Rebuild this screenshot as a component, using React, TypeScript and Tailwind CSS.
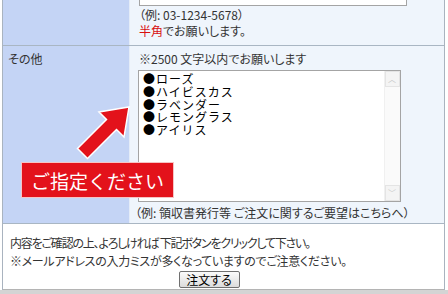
import React from 'react'

const jp = "font-['Noto_Sans_CJK_JP','Noto_Sans',sans-serif] [font-feature-settings:'palt']"

const flowers = ['ローズ', 'ハイビスカス', 'ラベンダー', 'レモングラス', 'アイリス']

function Arrow() {
  return (
    <svg
      className="absolute left-[60px] top-[100px]"
      width="80"
      height="70"
      viewBox="60 100 80 70"
    >
      <polygon
        points="129,107 124,137 116.5,129.5 87.5,158.5 77.5,148.5 106.5,119.5 99,112"
        fill="#e3121b"
        stroke="#ffffff"
        strokeWidth="1.5"
        strokeLinejoin="miter"
      />
    </svg>
  )
}

export default function App() {
  return (
    <div className={`relative w-[448px] h-[294px] overflow-hidden bg-white text-[12px] leading-[16px] text-[#333] ${jp}`}>
      <div className="ml-[2px] w-[443px] border-l border-r border-[#a9b3bf]">
        {/* row: phone */}
        <div className="grid grid-cols-[127px_1fr] border-b border-[#a9b6c3]">
          <div className="bg-[#c4d4f5] border-r border-[#e4ecf8]"></div>
          <div className="bg-[#eff5fc] h-[45px] pl-[9px]">
            <div className="w-[268px] h-[6px] bg-white border border-t-0 border-[#a4a4a4]"></div>
            <p className="mt-[1px]">（例: 03-1234-5678）</p>
            <p>
              <span className="text-[#d81010]">半角</span>でお願いします。
            </p>
          </div>
        </div>

        {/* row: other */}
        <div className="grid grid-cols-[127px_1fr] border-b border-[#a9b6c3]">
          <div className="bg-[#c4d4f5] border-r border-[#e4ecf8] pl-[5px] pt-[5px]">その他</div>
          <div className="bg-[#eff5fc] h-[177px] pl-[9px] pt-[5px]">
            <p>※2500 文字以内でお願いします</p>
            <div className="relative mt-[3px] ml-[-1px] w-[263px] h-[132px] bg-white border border-[#a4a4a4] pl-[4px] pt-[2px] leading-[12.8px] tracking-[1px] [font-feature-settings:normal]">
              {flowers.map((f) => (
                <p key={f} className="text-black">●{f}</p>
              ))}
              <div className="absolute right-0 top-0 bottom-0 w-[16px] bg-[#fafafa] border-l border-[#f0f0f0] flex flex-col justify-between">
                <div className="h-[16px] border border-[#e4e4e4] bg-[#f4f4f4] text-[#c8c8c8] text-[8px] leading-[14px] text-center">︿</div>
                <div className="h-[16px] border border-[#e4e4e4] bg-[#f4f4f4] text-[#c8c8c8] text-[8px] leading-[14px] text-center">﹀</div>
              </div>
            </div>
            <p className="mt-[3px] ml-[-4px]">（例: 領収書発行等 ご注文に関するご要望はこちらへ）</p>
          </div>
        </div>

        {/* confirm */}
        <div className="h-[66px] pl-[7px] pt-[10px] border-b border-[#b4b4b4]">
          <p className="leading-[18px] tracking-[-1.2px]">内容をご確認の上、よろしければ 下記ボタンをクリックして下さい。</p>
          <p className="leading-[18px] tracking-[-0.3px]">※メールアドレスの入力ミスが多くなっていますのでご注意ください。</p>
          <div className="flex justify-center pr-[36px] pt-[1px]">
            <button className="w-[61px] h-[17px] border border-[#707070] rounded-[2px] bg-gradient-to-b from-[#fbfbfb] to-[#dcdcdc] text-[12px] leading-[14px] text-black">
              注文する
            </button>
          </div>
        </div>
      </div>
      <div className="h-[4px] bg-[#d4d4d4]"></div>

      <Arrow />
      <div className="absolute left-[22px] top-[163px] w-[151px] h-[34px] bg-[#e3121b] outline outline-1 outline-[#f6c4c4] flex items-center justify-center text-white text-[19px] leading-none [font-feature-settings:normal]">
        ご指定ください
      </div>
    </div>
  )
}
